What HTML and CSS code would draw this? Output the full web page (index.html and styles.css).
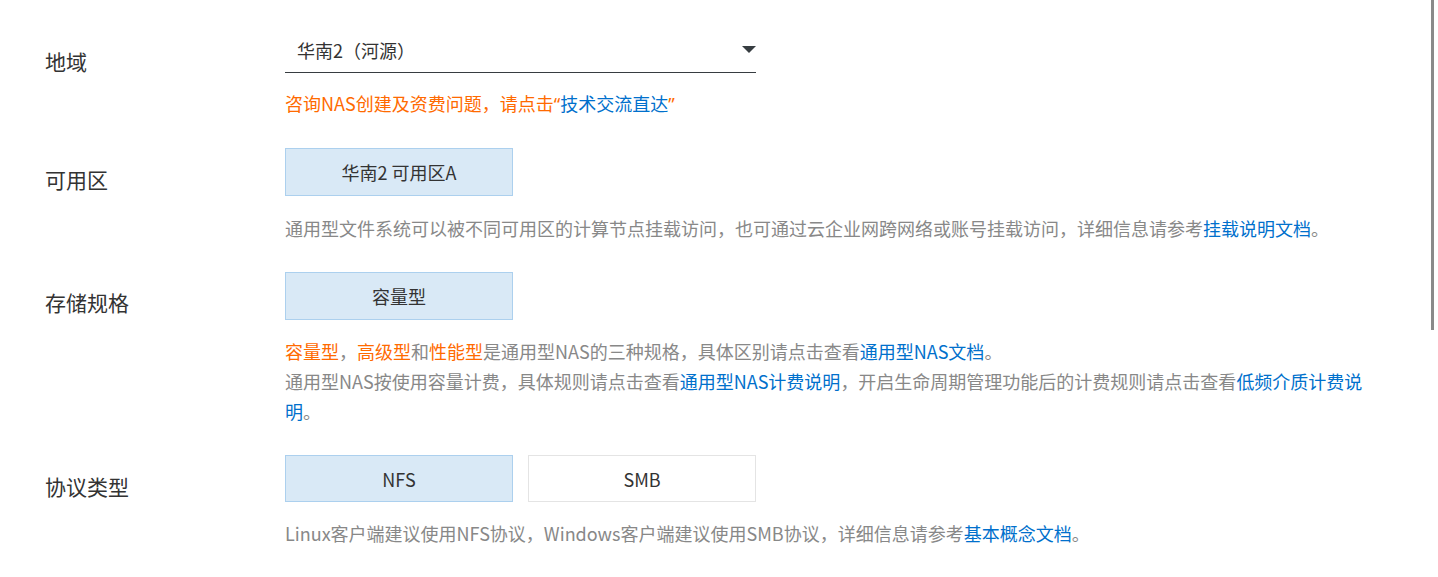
FILE: index.html
```html
<!DOCTYPE html>
<html lang="zh-CN">
<head>
<meta charset="utf-8">
<title>NAS</title>
<link rel="stylesheet" href="styles.css">
</head>
<body>
<div class="form">
  <div class="row row-region">
    <div class="label">地域</div>
    <div class="field">
      <div class="select">
        <span class="select-text">华南2（河源）</span>
        <span class="caret"></span>
      </div>
      <div class="help help-first orange">咨询NAS创建及资费问题，请点击<span class="quote">“</span><a class="link">技术交流直达</a><span class="quote">”</span></div>
    </div>
  </div>

  <div class="row">
    <div class="label">可用区</div>
    <div class="field">
      <div class="options">
        <div class="opt selected">华南2 可用区A</div>
      </div>
      <div class="help">通用型文件系统可以被不同可用区的计算节点挂载访问，也可通过云企业网跨网络或账号挂载访问，详细信息请参考<a class="link">挂载说明文档</a>。</div>
    </div>
  </div>

  <div class="row row-spec">
    <div class="label">存储规格</div>
    <div class="field">
      <div class="options">
        <div class="opt selected">容量型</div>
      </div>
      <div class="help-group">
        <div class="help help-line"><span class="orange">容量型</span>，<span class="orange">高级型</span>和<span class="orange">性能型</span>是通用型NAS的三种规格，具体区别请点击查看<a class="link">通用型NAS文档</a>。</div>
        <div class="help help-line">通用型NAS按使用容量计费，具体规则请点击查看<a class="link">通用型NAS计费说明</a>，开启生命周期管理功能后的计费规则请点击查看<a class="link">低频介质计费说明</a>。</div>
      </div>
    </div>
  </div>

  <div class="row row-proto">
    <div class="label">协议类型</div>
    <div class="field">
      <div class="options">
        <div class="opt selected">NFS</div>
        <div class="opt">SMB</div>
      </div>
      <div class="help help-last">Linux客户端建议使用NFS协议，Windows客户端建议使用SMB协议，详细信息请参考<a class="link">基本概念文档</a>。</div>
    </div>
  </div>
</div>
<div class="scroll-thumb"></div>
</body>
</html>
```

FILE: styles.css
```css
html, body {
  margin: 0;
  padding: 0;
  background: #ffffff;
}

body {
  font-family: "Noto Sans CJK SC", "Noto Sans", sans-serif;
  color: #333333;
  width: 1438px;
  height: 577px;
  overflow: hidden;
  position: relative;
}

.form {
  padding: 30px 0 0 45px;
  display: flex;
  flex-direction: column;
  gap: 29px;
}

.row {
  display: flex;
  align-items: flex-start;
}

.label {
  width: 240px;
  flex: 0 0 240px;
  font-size: 21px;
  line-height: 22px;
  padding-top: 20px;
  color: #333333;
}

.row-spec .label {
  padding-top: 19px;
}

.field {
  display: flex;
  flex-direction: column;
}

.select {
  width: 471px;
  height: 42px;
  border-bottom: 1px solid #373d41;
  display: flex;
  align-items: center;
  justify-content: space-between;
  box-sizing: content-box;
}

.select-text {
  font-size: 18px;
  line-height: 24px;
  padding-left: 12px;
  margin-top: -2px;
  color: #333333;
}

.caret {
  width: 0;
  height: 0;
  border-left: 7px solid transparent;
  border-right: 7px solid transparent;
  border-top: 7px solid #373d41;
  margin-top: -3px;
}

.options {
  display: flex;
  gap: 15px;
}

.opt {
  width: 228px;
  height: 48px;
  box-sizing: border-box;
  border: 1px solid #e4e4e4;
  background: #ffffff;
  display: flex;
  align-items: center;
  justify-content: center;
  font-size: 18px;
  color: #333333;
}

.opt.selected {
  background: #d9e9f6;
  border-color: #acd0ee;
}

.row-proto .opt {
  height: 47px;
}

.help {
  margin-top: 17px;
  width: 1088px;
  font-size: 18px;
  line-height: 30px;
  color: #888888;
}

.help-first {
  margin-top: 15px;
  color: #ff6a00;
}

.quote {
  font-family: "Noto Sans", sans-serif;
}

.help-group {
  margin-top: 16px;
  display: flex;
  flex-direction: column;
}

.help-group .help-line {
  margin-top: 0;
}

.help-last {
  margin-top: 16px;
}

.orange {
  color: #ff6a00;
}

.link {
  color: #0070cc;
  text-decoration: none;
}

.scroll-thumb {
  position: absolute;
  top: 0;
  left: 1431px;
  width: 3px;
  height: 330px;
  background: #8a8a8a;
}
```
